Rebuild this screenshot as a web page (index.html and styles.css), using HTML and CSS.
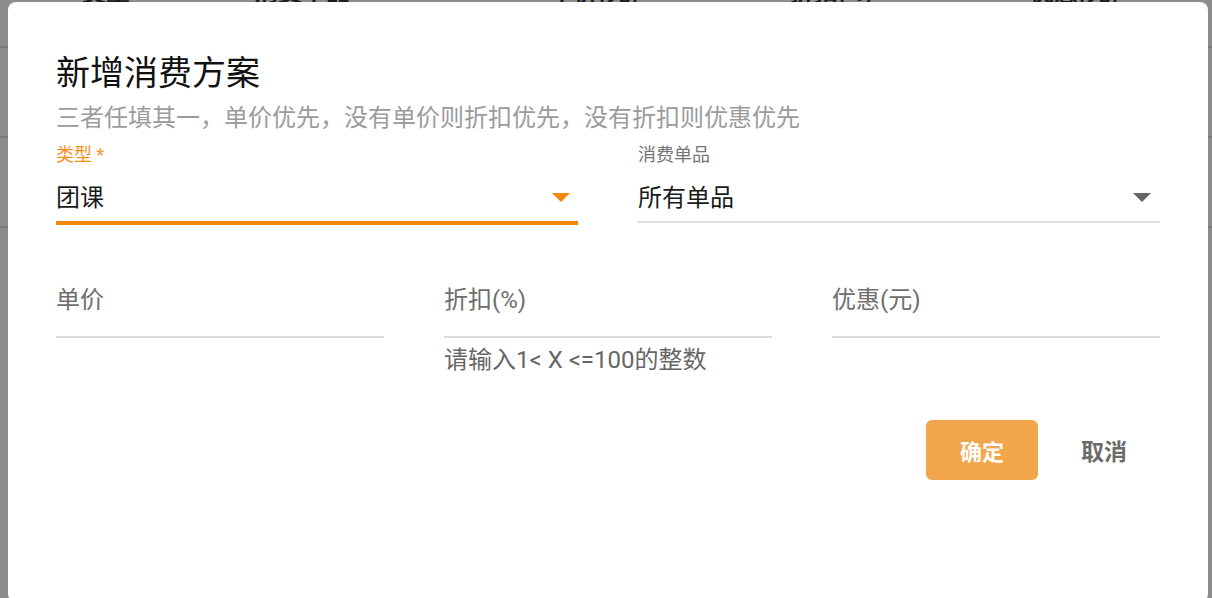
FILE: index.html
```html
<!DOCTYPE html>
<html lang="zh">
<head>
<meta charset="utf-8">
<title>新增消费方案</title>
<link rel="stylesheet" href="styles.css">
</head>
<body>
<div class="page">
  <div class="table">
    <div class="thead">
      <div class="th c1">类型</div>
      <div class="th c2">消费单品</div>
      <div class="th c3">单价(元)</div>
      <div class="th c4">折扣(%)</div>
      <div class="th c5">优惠(元)</div>
    </div>
    <div class="tr"></div>
    <div class="tr"></div>
    <div class="tr"></div>
    <div class="tr"></div>
  </div>
</div>
<div class="backdrop"></div>
<div class="dialog">
  <h1 class="title">新增消费方案</h1>
  <p class="subtitle">三者任填其一，单价优先，没有单价则折扣优先，没有折扣则优惠优先</p>
  <div class="row two">
    <div class="select focused">
      <div class="slabel">类型 *</div>
      <div class="sbox">
        <span class="svalue">团课</span>
        <svg class="arrow" width="18" height="9" viewBox="0 0 18 9"><path d="M0 0H18L9 9Z"/></svg>
      </div>
    </div>
    <div class="select">
      <div class="slabel">消费单品</div>
      <div class="sbox">
        <span class="svalue">所有单品</span>
        <svg class="arrow" width="18" height="9" viewBox="0 0 18 9"><path d="M0 0H18L9 9Z"/></svg>
      </div>
    </div>
  </div>
  <div class="row three">
    <div class="tfield">
      <div class="tbox">单价</div>
    </div>
    <div class="tfield">
      <div class="tbox">折扣(%)</div>
      <div class="helper">请输入1&lt; X &lt;=100的整数</div>
    </div>
    <div class="tfield">
      <div class="tbox">优惠(元)</div>
    </div>
  </div>
  <div class="actions">
    <button class="btn primary">确定</button>
    <button class="btn text">取消</button>
  </div>
</div>
</body>
</html>
```
FILE: styles.css
```css
* { box-sizing: border-box; }
html, body {
  margin: 0;
  padding: 0;
  width: 1212px;
  height: 598px;
  overflow: hidden;
  background: #fff;
  font-family: Roboto, "Noto Sans CJK SC", sans-serif;
}
.page { width: 1212px; }
.table { margin-top: -60px; }
.thead {
  display: flex;
  height: 108px;
  align-items: center;
  border-bottom: 2px solid #e2e2e2;
}
.th {
  font-size: 24px;
  font-weight: 700;
  color: #333;
  line-height: 30px;
}
.c1 { margin-left: 82px; width: 172px; }
.c2 { width: 296px; }
.c3 { width: 240px; }
.c4 { width: 240px; }
.tr { height: 90px; border-bottom: 2px solid #e2e2e2; }
.tr:nth-child(n+4) { border-bottom-color: transparent; }

.backdrop {
  position: fixed;
  inset: 0;
  background: rgba(0, 0, 0, 0.45);
}
.dialog {
  position: fixed;
  left: 8px;
  top: 2px;
  width: 1200px;
  height: 600px;
  background: #fff;
  border-radius: 8px;
  padding: 51px 48px 0;
}
.title {
  margin: 0;
  font-size: 34px;
  line-height: 40px;
  font-weight: 400;
  color: #111;
}
.subtitle {
  margin: 9px 0 0;
  font-size: 24px;
  line-height: 32px;
  color: #9b9b9b;
}
.row { display: grid; column-gap: 60px; align-items: start; }
.row.two { grid-template-columns: 1fr 1fr; margin-top: 10px; }
.row.three { grid-template-columns: 1fr 1fr 1fr; margin-top: 59px; }

.slabel {
  font-size: 18px;
  line-height: 22px;
  color: #757575;
}
.select.focused .slabel { color: #f7901e; }
.sbox {
  display: flex;
  align-items: center;
  justify-content: space-between;
  padding: 16px 9px 7px 0;
  border-bottom: 2px solid #dcdcdc;
}
.select.focused .sbox { border-bottom: 4px solid #f7870b; }
.svalue {
  font-size: 24px;
  line-height: 32px;
  color: #1a1a1a;
}
.arrow { display: block; fill: #666; margin-top: -2px; }
.select.focused .arrow { fill: #f7870b; margin-right: -1px; }

.tbox {
  font-size: 24px;
  line-height: 32px;
  color: #6e6e6e;
  padding-bottom: 20px;
  border-bottom: 2px solid #dcdcdc;
}
.helper {
  margin-top: 6px;
  font-size: 24px;
  line-height: 32px;
  color: #666;
}
.actions {
  display: flex;
  justify-content: flex-end;
  gap: 10px;
  margin-top: 44px;
}
.btn {
  width: 112px;
  height: 60px;
  border: none;
  border-radius: 6px;
  font-family: Roboto, "Noto Sans CJK SC", sans-serif;
  font-size: 22px;
  font-weight: 700;
  cursor: pointer;
  padding: 0;
}
.btn.primary { background: #f2a64b; color: #fff; }
.btn.text { background: transparent; color: #6b6b6b; font-size: 23px; }
```
